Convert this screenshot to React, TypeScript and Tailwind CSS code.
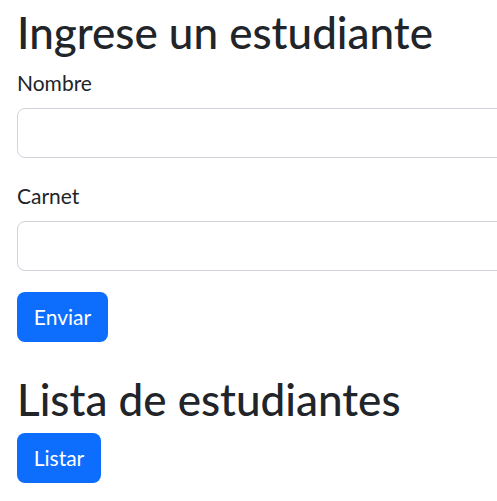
const Field: React.FC<{ label: string; className?: string }> = ({ label, className }) => (
  <div className={className}>
    <label className="block text-[21px] leading-[31px] mb-[10px]">{label}</label>
    <input
      type="text"
      className="block w-[560px] h-[50px] rounded-[8px] border border-[#ced4da] bg-white px-4 outline-none"
    />
  </div>
);

export default function App() {
  return (
    <div className="w-[497px] h-[501px] overflow-hidden bg-white text-[#212529] font-['Lato',sans-serif]">
      <div className="pl-[17px] w-[600px]">
        <h1 className="text-[44px] leading-[54px] font-medium mt-[5px]">Ingrese un estudiante</h1>
        <Field label="Nombre" className="mt-[8px]" />
        <Field label="Carnet" className="mt-[22px]" />
        <button className="mt-[21px] h-[50px] w-[91px] rounded-[8px] bg-[#0d6efd] text-white text-[21px]">
          Enviar
        </button>
        <h2 className="text-[44px] leading-[54px] font-medium mt-[30px]">Lista de estudiantes</h2>
        <button className="mt-[7px] h-[50px] w-[84px] rounded-[8px] bg-[#0d6efd] text-white text-[21px]">
          Listar
        </button>
      </div>
    </div>
  );
}
